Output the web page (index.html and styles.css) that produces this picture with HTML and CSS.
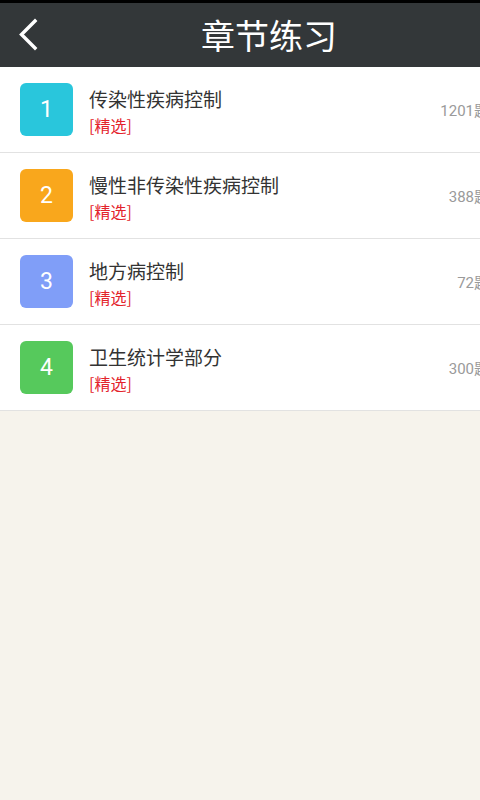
FILE: index.html
```
<!DOCTYPE html>
<html lang="zh-CN">
<head>
<meta charset="utf-8">
<title>章节练习</title>
<link rel="stylesheet" href="styles.css">
</head>
<body>
<div class="statusbar"></div>
<header class="topbar">
  <div class="back">
    <svg width="58" height="64" viewBox="0 0 58 64"><polyline points="35,18 21.5,31.5 35,45" fill="none" stroke="#ffffff" stroke-width="3.4" stroke-linecap="square"/></svg>
  </div>
  <h1 class="title">章节练习</h1>
</header>
<ul class="list">
  <li class="row">
    <div class="badge c1">1</div>
    <div class="info"><div class="name">传染性疾病控制</div><div class="tag">[精选]</div></div>
    <div class="count">1201题</div>
  </li>
  <li class="row">
    <div class="badge c2">2</div>
    <div class="info"><div class="name">慢性非传染性疾病控制</div><div class="tag">[精选]</div></div>
    <div class="count">388题</div>
  </li>
  <li class="row">
    <div class="badge c3">3</div>
    <div class="info"><div class="name">地方病控制</div><div class="tag">[精选]</div></div>
    <div class="count">72题</div>
  </li>
  <li class="row">
    <div class="badge c4">4</div>
    <div class="info"><div class="name">卫生统计学部分</div><div class="tag">[精选]</div></div>
    <div class="count">300题</div>
  </li>
</ul>
</body>
</html>
```
FILE: styles.css
```
html, body {
  margin: 0;
  padding: 0;
}
body {
  width: 480px;
  height: 800px;
  overflow: hidden;
  background: #f6f3ec;
  font-family: "Roboto", "Noto Sans CJK SC", sans-serif;
}
.statusbar {
  height: 3px;
  background: #000;
}
.topbar {
  height: 64px;
  background: #333739;
  display: flex;
  align-items: center;
}
.back {
  width: 58px;
  height: 64px;
  flex: none;
}
.back svg { display: block; }
.title {
  flex: 1;
  margin: 0;
  text-align: center;
  color: #fff;
  font-family: "Noto Sans CJK SC", sans-serif;
  font-weight: 400;
  font-size: 34px;
  line-height: 64px;
}
.list {
  list-style: none;
  margin: 0;
  padding: 0;
  background: #fff;
  overflow: hidden;
}
.row {
  height: 85px;
  border-bottom: 1px solid #e2e2e2;
  display: flex;
  align-items: center;
  padding-left: 20px;
}
.badge {
  width: 53px;
  height: 53px;
  border-radius: 6px;
  flex: none;
  color: #fff;
  font-size: 23px;
  display: flex;
  align-items: center;
  justify-content: center;
  font-family: "Roboto", sans-serif;
}
.c1 { background: #29c6dc; }
.c2 { background: #f9a71c; }
.c3 { background: #809ef8; }
.c4 { background: #56c95c; }
.info {
  flex: 1;
  margin-left: 16px;
  padding-top: 4px;
  display: flex;
  flex-direction: column;
  gap: 2px;
}
.name {
  font-family: "Noto Sans CJK SC", sans-serif;
  font-size: 19px;
  line-height: 24px;
  color: #333;
}
.tag {
  font-family: "Noto Sans CJK SC", sans-serif;
  font-size: 16px;
  line-height: 24px;
  color: #e3232b;
}
.count {
  flex: none;
  margin-right: -9px;
  font-size: 15px;
  color: #9a9a9a;
  font-family: "Roboto", "Noto Sans CJK SC", sans-serif;
}
```
